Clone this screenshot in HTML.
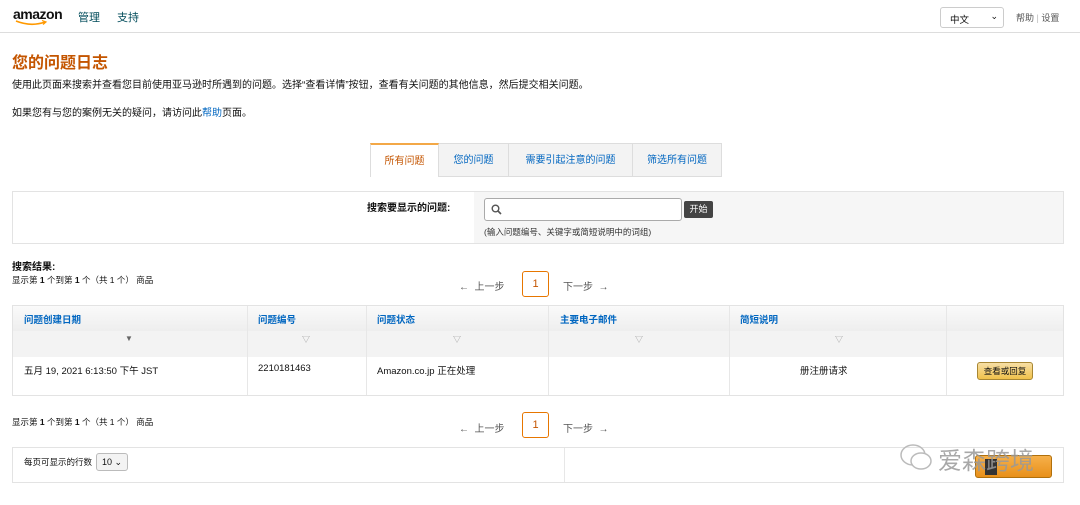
<!DOCTYPE html>
<html><head><meta charset="utf-8"><style>
*{margin:0;padding:0;box-sizing:border-box}
body{width:1080px;height:505px;background:#fff;font-family:"Liberation Sans","Noto Sans CJK SC",sans-serif;color:#111;position:relative;overflow:hidden;font-size:10px}
.a{position:absolute;white-space:nowrap}
.blue{color:#0066c0}
.hdr{position:absolute;left:0;top:0;width:1080px;height:33px;border-bottom:1px solid #ddd}
.tab{position:absolute;top:143px;height:34px;line-height:34px;text-align:center;font-size:10px;color:#0066c0;background:#f3f3f3;border:1px solid #ddd;border-left:none}
.box{position:absolute;border:1px solid #e3e3e3}
.pg{position:absolute;font-size:10px;color:#555}
.pbox{position:absolute;width:27px;height:26px;border:1px solid #e77600;border-radius:3px;color:#c45500;text-align:center;line-height:24px;font-size:11px}
.th{position:absolute;top:312px;font-size:9.5px;font-weight:bold;color:#0066c0}
.tri{position:absolute;top:334px;font-size:8px;color:#999}
.vl{position:absolute;top:306px;width:1px;height:89px;background:#e7e7e7}
</style></head><body>
<div class="hdr"></div>
<div class="a" style="left:13px;top:6px;font-size:14px;font-weight:bold;letter-spacing:-0.5px;color:#111">amazon</div>
<svg class="a" style="left:15px;top:20px" width="34" height="6"><path d="M1 1 Q16 7 30 2" stroke="#f90" stroke-width="1.6" fill="none"/><path d="M27 0.5 L31 2 L28 4.5" stroke="#f90" stroke-width="1.2" fill="none"/></svg>
<div class="a" style="left:78px;top:9px;font-size:11px;color:#004b5a">管理</div>
<div class="a" style="left:117px;top:9px;font-size:11px;color:#004b5a">支持</div>
<div class="a" style="left:940px;top:7px;width:64px;height:21px;border:1px solid #ccc;border-radius:3px;font-size:9.5px;padding:4px 0 0 9px">中文<span style="position:absolute;right:5px;top:3px;font-size:9px">⌄</span></div>
<div class="a" style="left:1016px;top:11px;font-size:9px;color:#555">帮助 <span style="color:#bbb">|</span> 设置</div>

<div class="a" style="left:12px;top:49px;font-size:16px;font-weight:bold;color:#c45500">您的问题日志</div>
<div class="a" style="left:12px;top:76px;font-size:10px">使用此页面来搜索并查看您目前使用亚马逊时所遇到的问题。选择“查看详情”按钮，查看有关问题的其他信息，然后提交相关问题。</div>
<div class="a" style="left:12px;top:104px;font-size:10px">如果您有与您的案例无关的疑问，请访问此<span class="blue">帮助</span>页面。</div>

<div class="tab" style="left:370px;width:69px;background:#fff;border-left:1px solid #ddd;border-top:2px solid #f3a847;border-bottom:none;color:#c45500">所有问题</div>
<div class="tab" style="left:439px;width:70px">您的问题</div>
<div class="tab" style="left:509px;width:124px">需要引起注意的问题</div>
<div class="tab" style="left:633px;width:89px">筛选所有问题</div>

<div class="box" style="left:12px;top:191px;width:1052px;height:53px"></div>
<div class="a" style="left:474px;top:192px;width:589px;height:51px;background:#f6f6f6"></div>
<div class="a" style="left:367px;top:199px;font-size:10px;font-weight:bold">搜索要显示的问题:</div>
<div class="a" style="left:484px;top:198px;width:198px;height:23px;border:1px solid #aaa;border-radius:3px;background:#fff"></div>
<svg class="a" style="left:491px;top:204px" width="11" height="11"><circle cx="4.5" cy="4.5" r="3.3" stroke="#555" stroke-width="1.4" fill="none"/><path d="M7 7 L10 10" stroke="#555" stroke-width="1.6"/></svg>
<div class="a" style="left:684px;top:201px;width:29px;height:17px;background:#444;border-radius:2px;color:#fff;font-size:9px;text-align:center;line-height:17px">开始</div>
<div class="a" style="left:484px;top:226px;font-size:8.5px;color:#333">(输入问题编号、关键字或简短说明中的词组)</div>

<div class="a" style="left:12px;top:258px;font-size:10px;font-weight:bold">搜索结果:</div>
<div class="a" style="left:12px;top:274px;font-size:8.5px">显示第 <b>1</b> 个到第 <b>1</b> 个（共 1 个） 商品</div>
<div class="pg" style="left:459px;top:278px">←&nbsp; 上一步</div>
<div class="pbox" style="left:522px;top:271px">1</div>
<div class="pg" style="left:563px;top:278px">下一步 &nbsp;→</div>

<div class="box" style="left:12px;top:305px;width:1052px;height:91px"></div>
<div class="a" style="left:13px;top:306px;width:1050px;height:25px;background:linear-gradient(#fafafa,#eee)"></div>
<div class="a" style="left:13px;top:331px;width:1050px;height:26px;background:#f3f3f3"></div>
<div class="vl" style="left:247px"></div><div class="vl" style="left:366px"></div><div class="vl" style="left:548px"></div><div class="vl" style="left:729px"></div><div class="vl" style="left:946px"></div>
<div class="th" style="left:24px">问题创建日期</div>
<div class="th" style="left:258px">问题编号</div>
<div class="th" style="left:377px">问题状态</div>
<div class="th" style="left:560px">主要电子邮件</div>
<div class="th" style="left:740px">简短说明</div>
<div class="tri" style="left:125px;color:#666">▼</div>
<div class="tri" style="left:302px">▽</div>
<div class="tri" style="left:453px">▽</div>
<div class="tri" style="left:635px">▽</div>
<div class="tri" style="left:835px">▽</div>
<div class="a" style="left:24px;top:363px;font-size:9.5px">五月 19, 2021 6:13:50 下午 JST</div>
<div class="a" style="left:258px;top:363px;font-size:9.5px">2210181463</div>
<div class="a" style="left:377px;top:363px;font-size:9.5px">Amazon.co.jp 正在处理</div>
<div class="a" style="left:800px;top:363px;font-size:9.5px">册注册请求</div>
<div class="a" style="left:977px;top:362px;width:56px;height:18px;background:linear-gradient(#f7dfa5,#f0c14b);border:1px solid #a88734;border-radius:3px;font-size:8.5px;text-align:center;line-height:16px">查看或回复</div>

<div class="a" style="left:12px;top:416px;font-size:8.5px">显示第 <b>1</b> 个到第 <b>1</b> 个（共 1 个） 商品</div>
<div class="pg" style="left:459px;top:420px">←&nbsp; 上一步</div>
<div class="pbox" style="left:522px;top:412px">1</div>
<div class="pg" style="left:563px;top:420px">下一步 &nbsp;→</div>

<div class="box" style="left:12px;top:447px;width:1052px;height:36px"></div>
<div class="a" style="left:564px;top:448px;width:1px;height:34px;background:#e7e7e7"></div>
<div class="a" style="left:24px;top:456px;font-size:8.5px">每页可显示的行数</div>
<div class="a" style="left:96px;top:453px;width:32px;height:18px;border:1px solid #bbb;border-radius:3px;background:#f3f3f3;font-size:9px;padding:3px 0 0 5px">10 ⌄</div>
<div class="a" style="left:975px;top:455px;width:77px;height:23px;background:linear-gradient(#f6b04a,#e8901a);border:1px solid #b0700c;border-radius:3px"></div>
<div class="a" style="left:985px;top:459px;width:12px;height:16px;background:#333"></div>
<svg class="a" style="left:898px;top:441px" width="36" height="32"><ellipse cx="15" cy="14" rx="12" ry="10" fill="none" stroke="#bbb" stroke-width="1.5"/><ellipse cx="23" cy="20" rx="10" ry="8" fill="#fff" stroke="#bbb" stroke-width="1.5"/></svg>
<div class="a" style="left:938px;top:441px;font-size:24px;color:#999;opacity:0.85">爱森跨境</div>
</body></html>
